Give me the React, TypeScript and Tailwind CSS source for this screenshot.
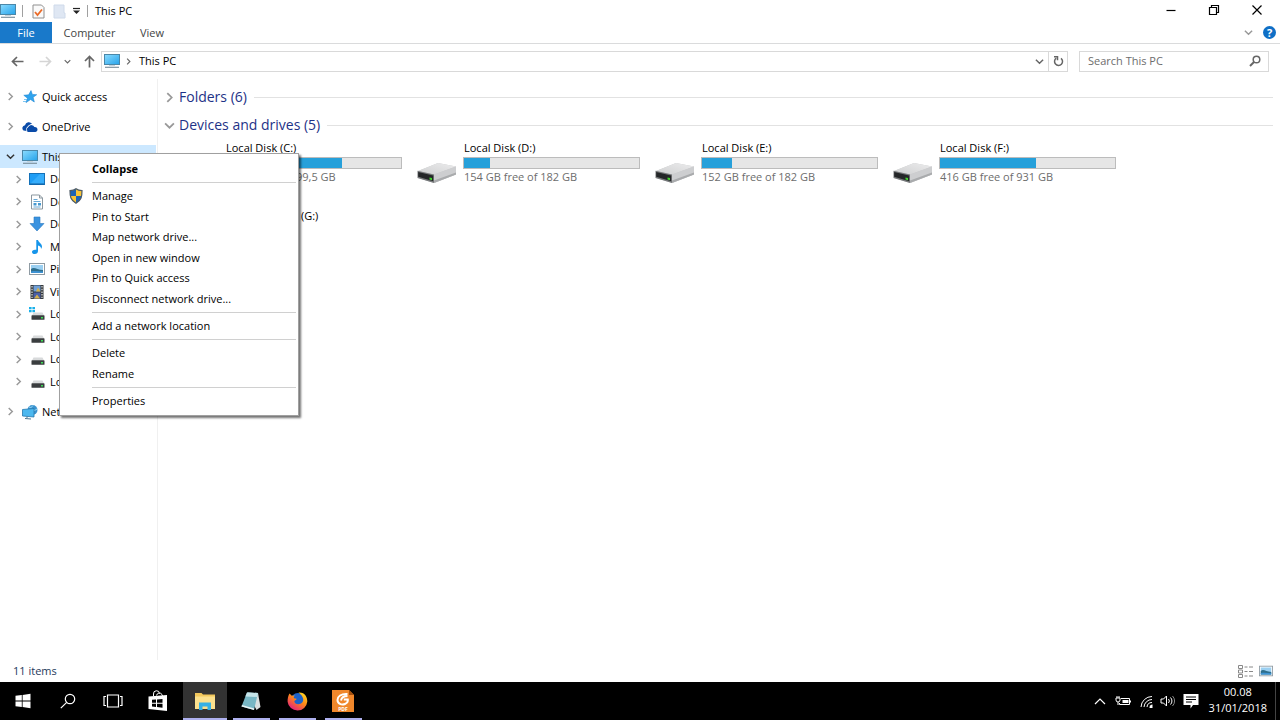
import type { ReactNode } from 'react';

interface Drive {
  name: string;
  used?: number;
  info?: string;
}

const drives: Drive[] = [
  { name: 'Local Disk (C:)', used: 66, info: '34 GB free of 99,5 GB' },
  { name: 'Local Disk (D:)', used: 15, info: '154 GB free of 182 GB' },
  { name: 'Local Disk (E:)', used: 17, info: '152 GB free of 182 GB' },
  { name: 'Local Disk (F:)', used: 55, info: '416 GB free of 931 GB' },
  { name: 'DVD RW Drive (G:)' },
];

/* ---------- Icons ---------- */

const Chevron = ({ dir, size = 9, className = '' }: { dir: 'right' | 'down' | 'up'; size?: number; className?: string }) => {
  const d = { right: 'M3 1l4 4-4 4', down: 'M1 3l4 4 4-4', up: 'M1 7l4-4 4 4' }[dir];
  return (
    <svg width={size} height={size} viewBox="0 0 10 10" fill="none" stroke="currentColor" strokeWidth="1.6" className={`shrink-0 ${className}`}>
      <path d={d} />
    </svg>
  );
};

const MonitorIcon = () => (
  <svg width="16" height="16" viewBox="0 0 16 16" className="shrink-0">
    <defs>
      <linearGradient id="screen" x1="0" y1="0" x2="1" y2="1">
        <stop offset="0" stopColor="#8bdcff" />
        <stop offset="1" stopColor="#25a2ea" />
      </linearGradient>
    </defs>
    <rect x="0.5" y="1.5" width="15" height="10" fill="url(#screen)" stroke="#4b87a8" />
    <path d="M1 14.3h14" stroke="#7d92a0" strokeWidth="1.2" />
    <path d="M5 12.5h6" stroke="#c4d3dc" />
  </svg>
);

const StarIcon = () => (
  <svg width="14" height="14" viewBox="0 0 14 14" className="shrink-0">
    <path d="M8 .6l1.300 3.800 4.400.3-3.600 2.600 1.200 4.700-3.700-2.500L3 12.600l1.500-4.400L.8 5.300l4.900-.5z" fill="#2fa4ee" stroke="#1f86d4" strokeWidth=".6" />
    <path d="M1 9.500h3M0 11.500h3" stroke="#5db9f0" strokeWidth=".8" />
  </svg>
);

const CloudIcon = () => (
  <svg width="16" height="12" viewBox="0 0 16 12" className="shrink-0">
    <path d="M1.5 9.5A3 3 0 0 1 3 4.2 4 4 0 0 1 10 2.8L6.5 4.6 4.3 7.5l.4 2.4z" fill="#0a4ba8" />
    <path d="M6 11a2.3 2.3 0 0 1-.2-4.400A3.600 3.600 0 0 1 12.400 6a2.600 2.600 0 0 1 3.100 2.600c0 1.400-1 2.400-2.200 2.400z" fill="#0a4ba8" />
    <path d="M4.900 10.500C3.800 8 5 6 6.300 5.700 7.300 3.800 9.500 3 11.300 4" fill="none" stroke="#fff" strokeWidth=".7" />
  </svg>
);

const DesktopIcon = () => (
  <svg width="16" height="14" viewBox="0 0 16 14">
    <rect x=".5" y="1.5" width="15" height="11" fill="#1e9df5" stroke="#1471b8" />
    <path d="M1 12L11 2h4v10z" fill="#36adfb" />
    <path d="M1 12h14" stroke="#0f5f9f" />
  </svg>
);

const DocumentIcon = () => (
  <svg width="14" height="16" viewBox="0 0 14 16">
    <path d="M1.5 1h8l3 3v11h-11z" fill="#fff" stroke="#8b979f" />
    <path d="M9.5 1v3h3" fill="none" stroke="#8b979f" />
    <path d="M3.5 5.5h4M3.5 7.5h7M3.5 13h7" stroke="#6aa9d4" />
    <path d="M3.5 9h3v2.5h-3zM8 9h3v2.5H8z" fill="#4899cf" />
  </svg>
);

const DownloadIcon = () => (
  <svg width="16" height="16" viewBox="0 0 16 16">
    <path d="M5 1h6v6.500h4L8 15 1 7.500h4z" fill="#3a93e0" stroke="#2a78c0" strokeWidth=".6" />
  </svg>
);

const MusicIcon = () => (
  <svg width="14" height="16" viewBox="0 0 14 16">
    <path d="M6.300 1h1.700c.3 2.500 4 3.200 4 6.500 0 1-.3 1.800-1 2.500.3-2-1-3-3-3.600V12c0 1.800-1.400 3-3.200 3S2 14.100 2 12.900c0-1.500 1.700-2.600 4.300-2.100z" fill="#1695ea" />
  </svg>
);

const PictureIcon = ({ size = 16 }: { size?: number }) => (
  <svg width={size} height={size} viewBox="0 0 16 16">
    <rect x=".5" y="2.500" width="15" height="11" fill="#fff" stroke="#8f9ba3" />
    <rect x="2" y="4" width="12" height="8" fill="#9bd0f2" />
    <path d="M2 8c3-3 6 1 12 1v3H2z" fill="#2f6f8d" />
    <path d="M2 10.500c4-1 8 0 12 0V12H2z" fill="#3e93d4" />
  </svg>
);

const VideoIcon = () => (
  <svg width="14" height="16" viewBox="0 0 14 16">
    <rect x=".5" y="1" width="13" height="14" fill="#33373a" />
    <rect x="3.500" y="1.500" width="7" height="6" fill="#6f9fd8" />
    <rect x="3.500" y="8.500" width="7" height="6" fill="#4a5fa8" />
    <path d="M6 7.500l2-4 2.500 4zM4 14.500l3-4 3 4z" fill="#d6b14a" />
    <path d="M2 2v12M12 2v12" stroke="#e5e5e5" strokeWidth="1.200" strokeDasharray="1.500 1.200" />
  </svg>
);

const SmallDriveIcon = ({ system = false }: { system?: boolean }) => (
  <svg width="16" height="16" viewBox="0 0 16 16">
    {system && <path d="M0 1h2.600v2.200H0zM3.400 1H6v2.200H3.400zM0 4h2.600v2.200H0zM3.400 4H6v2.200H3.400z" fill="#18b0ea" />}
    <path d="M4.500 6.500h9L15 9.500H3z" fill="#d8dadb" />
    <rect x="2.500" y="9.300" width="13" height="4.500" rx=".6" fill="#3a3d3f" />
    <rect x="12" y="11" width="2" height="1.500" fill="#3ddc55" />
  </svg>
);

const NetworkIcon = () => (
  <svg width="16" height="16" viewBox="0 0 16 16" className="shrink-0">
    <circle cx="10.500" cy="6" r="5" fill="#3b93cf" />
    <path d="M7 3c2 1 3 0 4-1.500M8 8c2-2 5-1 7-3" stroke="#9ddcf8" fill="none" />
    <path d="M.5 5.500l11.500-1v8.500L.5 12z" fill="#4cb8ef" stroke="#2679ae" strokeWidth=".8" />
    <path d="M5 12.500v1.500M3 14.500l6 .5" stroke="#4c7791" />
  </svg>
);

const DriveIcon = () => (
  <svg width="40" height="22" viewBox="0 0 40 22" className="shrink-0">
    <defs>
      <linearGradient id="driveTop" x1="0" y1="1" x2="1" y2="0">
        <stop offset="0" stopColor="#cfd0d1" />
        <stop offset="1" stopColor="#ececed" />
      </linearGradient>
    </defs>
    <path d="M1 9L21 1l18 3.500v8L17 21 1 16z" fill="#c6c7c9" />
    <path d="M1 9L21 1l18 3.500L17 12.500z" fill="url(#driveTop)" />
    <path d="M17 12.500L39 4.500v8L17 21z" fill="#cdced0" />
    <path d="M17 18.500l22-8v2L17 21z" fill="#a9abad" />
    <path d="M.5 8.800L17 12.500V21L.5 16z" fill="#77797b" />
    <path d="M1.200 10l15 3.600v5.600l-15-4.400z" fill="#242628" />
    <path d="M12.500 15.500l2.500.6v2.200l-2.500-.7z" fill="#42d52f" />
  </svg>
);

const ShieldIcon = () => (
  <svg width="14" height="16" viewBox="0 0 14 16">
    <path d="M7 .8c1.800 1.400 3.800 1.900 6 1.900 0 6-.5 9.500-6 12.500C1.500 12.200 1 8.700 1 2.700c2.200 0 4.200-.5 6-1.900z" fill="#1e63b5" />
    <path d="M7 .8c1.800 1.400 3.800 1.900 6 1.900 0 2-.1 3.800-.4 5.300H7zM1.400 8H7v7.200C3.400 13.200 1.900 11 1.400 8z" fill="#f9c436" />
    <path d="M7 .8c1.800 1.400 3.800 1.900 6 1.900 0 6-.5 9.500-6 12.500C1.500 12.200 1 8.700 1 2.700c2.200 0 4.200-.5 6-1.900z" fill="none" stroke="#4d5b66" strokeWidth="1.200" />
  </svg>
);

/* ---------- Title bar, ribbon and address bar ---------- */

const WindowButton = ({ label, children }: { label: string; children: ReactNode }) => (
  <button aria-label={label} className="flex w-[43px] items-center justify-center pb-[2px] hover:bg-gray-200">
    <svg width="12" height="12" viewBox="0 0 12 12" fill="none" stroke="#000" strokeWidth="1.2">
      {children}
    </svg>
  </button>
);

const TitleBar = () => (
  <header className="flex h-[22px] items-stretch justify-between pr-[2px]">
    <div className="flex items-center">
      <MonitorIcon />
      <span className="ml-[6px] h-3 w-px bg-[#a0a0a0]" />
      <button aria-label="Properties" className="ml-[9px]">
        <svg width="13" height="15" viewBox="0 0 13 15" fill="none" className="block">
          <path d="M1 1h8.500L12 3.500V14H1z" fill="#fafafa" stroke="#8f8f8f" />
          <path d="M3 8l2.500 3L10 5.500" stroke="#ea6a26" strokeWidth="1.800" />
        </svg>
      </button>
      <button aria-label="New folder" className="ml-[8px]">
        <svg width="13" height="15" viewBox="0 0 13 15" className="block">
          <path d="M1 1h10v8h1v5H1z" fill="#dfe7f3" stroke="#cfdaea" />
        </svg>
      </button>
      <button aria-label="Customize Quick Access Toolbar" className="ml-[6px]">
        <svg width="9" height="8" viewBox="0 0 9 8" className="block">
          <path d="M1 1.500h7" stroke="#222" strokeWidth="1.200" />
          <path d="M1 3.500h7L4.500 7z" fill="#222" />
        </svg>
      </button>
      <span className="ml-[6px] h-3 w-px bg-[#a0a0a0]" />
      <h1 className="ml-[7px]">This PC</h1>
    </div>
    <div className="flex">
      <WindowButton label="Minimize">
        <path d="M1.500 6.500h9" />
      </WindowButton>
      <WindowButton label="Restore">
        <path d="M1.500 3.500h7v7h-7zM3.500 3.500v-2h7v7h-2" />
      </WindowButton>
      <WindowButton label="Close">
        <path d="M1.500 1.500l9 9M10.500 1.500l-9 9" />
      </WindowButton>
    </div>
  </header>
);

const Ribbon = () => (
  <div className="flex h-[22px] items-stretch justify-between border-b border-[#dadbdc] text-[#444]">
    <div className="flex">
      <button className="w-[52px] bg-[#1979ca] text-white">File</button>
      <button className="w-[75px]">Computer</button>
      <button className="w-[50px]">View</button>
    </div>
    <div className="flex items-center gap-[10px] pr-[4px]">
      <button aria-label="Expand the Ribbon" className="text-[#999]">
        <Chevron dir="down" />
      </button>
      <button aria-label="Help" className="flex size-[13px] items-center justify-center rounded-full bg-[#0f6fc6] text-[11px] font-bold leading-none text-white">
        ?
      </button>
    </div>
  </div>
);

const Arrow = ({ d, label, className }: { d: string; label: string; className: string }) => (
  <button aria-label={label} className={className}>
    <svg width="13" height="13" viewBox="0 0 13 13" fill="none" stroke="currentColor" strokeWidth="1.700" className="block">
      <path d={d} />
    </svg>
  </button>
);

const AddressBar = () => (
  <div className="flex h-[35px] items-center pb-[1px] pl-[11px] pr-[11px] text-[#666]">
    <Arrow label="Back" d="M12.500 6.500H1.500M6 2L1.500 6.500 6 11" className="w-[13px]" />
    <Arrow label="Forward" d="M.5 6.500h11M7 2l4.500 4.500L7 11" className="ml-[15px] w-[13px] text-[#d5d5d5]" />
    <button aria-label="Recent locations" className="ml-[12px]">
      <Chevron dir="down" size={7} />
    </button>
    <Arrow label="Up" d="M6.500 12.500V1.500M2 6l4.500-4.500L11 6" className="ml-[12px] w-[13px]" />
    <div className="ml-[5px] flex h-[21px] flex-1 items-stretch border border-[#d9d9d9]">
      <div className="flex flex-1 items-center pl-[2px]">
        <MonitorIcon />
        <Chevron dir="right" size={7} className="ml-[5px]" />
        <button className="ml-[7px] text-black">This PC</button>
      </div>
      <button aria-label="Previous locations" className="flex w-[18px] items-center justify-center">
        <Chevron dir="down" />
      </button>
      <button aria-label="Refresh" className="flex w-[19px] items-center justify-center border-l border-[#d9d9d9]">
        <svg width="11" height="12" viewBox="0 0 11 12" fill="none" stroke="currentColor" strokeWidth="1.500">
          <path d="M8 3.300A4 4 0 1 1 3.200 3.200" />
          <path d="M1 1.800h3.500v3.500" />
        </svg>
      </button>
    </div>
    <div className="ml-[11px] flex h-[21px] w-[190px] items-center border border-[#d9d9d9] pl-2 pr-[7px]">
      <input aria-label="Search This PC" placeholder="Search This PC" className="min-w-0 flex-1 outline-none placeholder:text-[#6d6d6d]" />
      <svg width="12" height="12" viewBox="0 0 12 12" fill="none" stroke="currentColor" strokeWidth="1.500">
        <circle cx="7.500" cy="4.500" r="3.300" />
        <path d="M5 7L1 11" strokeWidth="2" />
      </svg>
    </div>
  </div>
);

/* ---------- Context menu ---------- */

const MenuItem = ({ children, icon }: { children: ReactNode; icon?: ReactNode }) => (
  <button role="menuitem" className="flex items-center text-left hover:bg-[#e5f3ff]">
    <span className="flex w-[32px] justify-center">{icon}</span>
    {children}
  </button>
);

const MenuSeparator = () => <div role="separator" className="my-[3px] ml-[32px] mr-[2px] h-px bg-[#d0d0d0]" />;

const ContextMenu = () => (
  <div
    role="menu"
    className="absolute left-[59px] top-[8px] z-10 w-[240px] border border-[#a0a0a0] bg-white py-[4px] shadow-[2px_2px_2px_rgba(0,0,0,0.55)]"
  >
    <div className="grid h-[21px] font-bold">
      <MenuItem>Collapse</MenuItem>
    </div>
    <MenuSeparator />
    <div className="grid h-[123px] auto-rows-fr">
      <MenuItem icon={<ShieldIcon />}>Manage</MenuItem>
      <MenuItem>Pin to Start</MenuItem>
      <MenuItem>Map network drive...</MenuItem>
      <MenuItem>Open in new window</MenuItem>
      <MenuItem>Pin to Quick access</MenuItem>
      <MenuItem>Disconnect network drive...</MenuItem>
    </div>
    <MenuSeparator />
    <div className="grid h-5">
      <MenuItem>Add a network location</MenuItem>
    </div>
    <MenuSeparator />
    <div className="grid h-[41px] auto-rows-fr">
      <MenuItem>Delete</MenuItem>
      <MenuItem>Rename</MenuItem>
    </div>
    <MenuSeparator />
    <div className="grid h-5">
      <MenuItem>Properties</MenuItem>
    </div>
  </div>
);

/* ---------- Navigation pane ---------- */

const TreeRoot = ({ label, icon, open = false }: { label: string; icon: ReactNode; open?: boolean }) => (
  <button
    aria-expanded={open}
    className={`mr-[1px] flex h-[23px] items-center pl-[6px] text-left ${open ? 'bg-[#cce8ff] text-[#333]' : 'text-[#999]'}`}
  >
    <Chevron dir={open ? 'down' : 'right'} />
    <span className="ml-[7px] flex w-4 justify-center">{icon}</span>
    <span className="ml-[4px] text-black">{label}</span>
  </button>
);

const folders: { label: string; icon: ReactNode }[] = [
  { label: 'Desktop', icon: <DesktopIcon /> },
  { label: 'Documents', icon: <DocumentIcon /> },
  { label: 'Downloads', icon: <DownloadIcon /> },
  { label: 'Music', icon: <MusicIcon /> },
  { label: 'Pictures', icon: <PictureIcon /> },
  { label: 'Videos', icon: <VideoIcon /> },
  { label: 'Local Disk (C:)', icon: <SmallDriveIcon system /> },
  { label: 'Local Disk (D:)', icon: <SmallDriveIcon /> },
  { label: 'Local Disk (E:)', icon: <SmallDriveIcon /> },
  { label: 'Local Disk (F:)', icon: <SmallDriveIcon /> },
];

const Sidebar = () => (
  <nav className="flex w-[158px] shrink-0 flex-col border-r border-[#f0f0f0] pt-[6px]">
    <TreeRoot label="Quick access" icon={<StarIcon />} />
    <div className="h-[7px]" />
    <TreeRoot label="OneDrive" icon={<CloudIcon />} />
    <div className="h-[7px]" />
    <div className="relative flex flex-col">
      <TreeRoot label="This PC" icon={<MonitorIcon />} open />
      <ContextMenu />
    </div>
    <div className="grid h-[225px] auto-rows-fr">
      {folders.map((item) => (
        <button key={item.label} className="flex items-center pl-[14px] text-left">
          <Chevron dir="right" className="text-[#999]" />
          <span className="ml-[6px] flex w-4 justify-center">{item.icon}</span>
          <span className="ml-[5px]">{item.label}</span>
        </button>
      ))}
    </div>
    <div className="h-[7px]" />
    <TreeRoot label="Network" icon={<NetworkIcon />} />
  </nav>
);

/* ---------- Drives ---------- */

const GroupHeader = ({ title, open = false }: { title: string; open?: boolean }) => (
  <div className="flex h-7 items-center">
    <button aria-expanded={open} className="flex items-center">
      <Chevron dir={open ? 'down' : 'right'} size={11} className="text-[#999]" />
      <h2 className="ml-[4px] text-[14px] text-[#1e3287]">{title}</h2>
    </button>
    <span className="ml-[7px] h-px flex-1 bg-[#e2e2e2]" />
  </div>
);

const DriveTile = ({ drive }: { drive: Drive }) => (
  <div className="flex h-[68px] items-start">
    <div className="pt-[21px]">
      <DriveIcon />
    </div>
    <div className="ml-[6px] w-[177px]">
      <p className="h-4 pl-px leading-[14px]">{drive.name}</p>
      {drive.used !== undefined && (
        <div className="h-[12px] border border-[#bcbcbc] bg-[#e6e6e6]">
          <div className="h-full bg-[#26a0da]" style={{ width: `${drive.used}%` }} />
        </div>
      )}
      <p className="h-4 pl-px leading-4 text-[#6d6d6d]">{drive.info}</p>
    </div>
  </div>
);

/* ---------- Taskbar ---------- */

const TaskButton = ({ label, children }: { label: string; children: ReactNode }) => (
  <button aria-label={label} className="flex w-[45px] items-center justify-center">
    {children}
  </button>
);

const AppButton = ({ label, active = false, children }: { label: string; active?: boolean; children: ReactNode }) => (
  <button aria-label={label} className={`flex w-11 flex-col items-center ${active ? 'bg-[#333]' : ''}`}>
    <span className="flex flex-1 items-center pt-[2px]">{children}</span>
    <span className={`h-[2px] bg-[#aeb0ee] ${active ? 'w-full' : 'w-[37px]'}`} />
  </button>
);

const Taskbar = () => (
  <footer className="flex h-[38px] items-stretch justify-between bg-black text-white">
    <div className="flex">
      <div className="flex">
        <TaskButton label="Start">
          <svg width="16" height="16" viewBox="0 0 16 16" fill="#fff">
            <path d="M.5 2.800L6.800 2v5.600H.5zM7.600 1.900L15.500.8v6.800H7.600zM.5 8.400h6.300V14L.5 13.200zM7.600 8.400h7.900v6.800l-7.900-1.100z" />
          </svg>
        </TaskButton>
        <TaskButton label="Search">
          <svg width="16" height="16" viewBox="0 0 16 16" fill="none" stroke="#fff" strokeWidth="1.200">
            <circle cx="10" cy="6" r="4.700" />
            <path d="M6.700 9.300L.8 15.200" />
          </svg>
        </TaskButton>
        <TaskButton label="Task View">
          <svg width="20" height="14" viewBox="0 0 20 14" fill="none" stroke="#fff" strokeWidth="1.200">
            <path d="M4.500 1h11v12h-11zM3 2.500H1v9h2M17 2.500h2v9h-2" />
          </svg>
        </TaskButton>
        <TaskButton label="Store">
          <svg width="20" height="22" viewBox="0 0 20 22">
            <path d="M5.500 6V4a3 3 0 0 1 6-.5M8.500 5.500a3 3 0 0 1 5.500-1l.5 1.500" fill="none" stroke="#fff" />
            <path d="M.5 6.500L19 5v16L.5 19z" fill="#fff" />
            <path d="M4 9.800l4-.3v3.300H4zM9 9.400l5.500-.5v3.900H9zM4 13.700h4V17l-4-.4zM9 13.700h5.500v4L9 17.100z" fill="#000" />
          </svg>
        </TaskButton>
      </div>
      <div className="ml-[3px] flex gap-[2px]">
        <AppButton label="File Explorer" active>
          <svg width="20" height="18" viewBox="0 0 20 18">
            <path d="M0 1h6.500l1.500 1.500h12V17H0z" fill="#f2c75c" />
            <path d="M0 4.500h20V17H0z" fill="#fbe08d" />
            <path d="M4 10.500h12V18h-3.500v-3.500h-5V18H4z" fill="#36b0e4" />
          </svg>
        </AppButton>
        <AppButton label="Notepad">
          <svg width="20" height="20" viewBox="0 0 20 20">
            <path d="M6.500 1.500L17 2l2.500 14-4 3z" fill="#d9dfe0" />
            <path d="M6 1.500l11 .5-4 17L.5 15.500z" fill="#77b6c4" />
            <path d="M6 1.500l11 .5-1 4L4.300 5.500z" fill="#c5e4e9" />
            <path d="M.5 15.500l12.500 3.500.3-1.500L1 14z" fill="#e8f2f4" />
          </svg>
        </AppButton>
        <AppButton label="Firefox">
          <svg width="21" height="21" viewBox="0 0 21 21">
            <defs>
              <linearGradient id="fox" x1=".9" y1="0" x2=".2" y2="1">
                <stop offset="0" stopColor="#ffe226" />
                <stop offset=".45" stopColor="#ff8a16" />
                <stop offset="1" stopColor="#e31587" />
              </linearGradient>
            </defs>
            <circle cx="11" cy="9.500" r="7.500" fill="#1c62c9" />
            <path d="M2.500 2.500l2.300 2.300L8 4.500c-1.200.8-1.500 1.800-1 2.800l2.500.4c.3.900-1.500 1.500-2.200 2.300.3 3 3.700 4.200 6.700 2.500 2.500-1.500 2.800-4.500 1.500-6.500C14.500 3.500 13 3 11.500 1.500c6.500-.5 9 5 8.800 9a9.900 9.900 0 0 1-19.700.3C.5 8 1.200 4.500 2.500 2.500z" fill="url(#fox)" />
          </svg>
        </AppButton>
        <AppButton label="Foxit Reader">
          <svg width="22" height="22" viewBox="0 0 22 22">
            <path d="M0 0h17l5 5v17H0z" fill="#f0872b" />
            <path d="M17 0v5h5z" fill="#a4500f" />
            <path d="M15.500 4C9 3.500 5.500 6.500 5.500 10c0 3.500 4 5.500 7.500 4 2.500-1 3-3 2.800-4.500h-4M9 10.500c.5-3 3.500-4.500 6.500-4.500" fill="none" stroke="#fff" strokeWidth="2" />
            <text x="11" y="21" textAnchor="middle" fontSize="5" fontWeight="700" fill="#fff">PDF</text>
          </svg>
        </AppButton>
      </div>
    </div>
    <div className="flex items-center">
      <button aria-label="Show hidden icons">
        <svg width="12" height="8" viewBox="0 0 12 8" fill="none" stroke="#fff" strokeWidth="1.200" className="block">
          <path d="M1 7l5-5 5 5" />
        </svg>
      </button>
      <button aria-label="Battery" className="ml-[9px]">
        <svg width="16" height="12" viewBox="0 0 16 12" fill="none" stroke="#fff" className="block">
          <path d="M6 3.500h8.500v6H4.500V8M15.500 5.500v2" />
          <path d="M7.500 5h6v3h-6z" fill="#fff" stroke="none" />
          <path d="M1 3h4v2a2 2 0 0 1-4 0zM2 1v2M4 1v2M3 7v3" />
        </svg>
      </button>
      <button aria-label="Wi-Fi" className="ml-[9px]">
        <svg width="13" height="13" viewBox="0 0 13 13" fill="none" stroke="#fff" className="block">
          <path d="M1 12A11 11 0 0 1 12 1.500M4 12a8 8 0 0 1 8-7.500M7 12a5 5 0 0 1 5-4.500" />
          <path d="M12.500 9.500V13H9.500a3 3 0 0 1 3-3.500z" fill="#fff" stroke="none" />
        </svg>
      </button>
      <button aria-label="Volume" className="ml-[7px]">
        <svg width="15" height="12" viewBox="0 0 15 12" fill="none" stroke="#fff" className="block">
          <path d="M1 4h2.500L6.500 1v10l-3-3H1z" />
          <path d="M8.500 4a3 3 0 0 1 0 4M10.500 2.500a5 5 0 0 1 0 7" />
          <path d="M12.500 1a7 7 0 0 1 0 10" stroke="#888" />
        </svg>
      </button>
      <button aria-label="Notifications" className="ml-[8px]">
        <svg width="16" height="16" viewBox="0 0 16 16" className="block">
          <path d="M.5 1h15v11H10l-2.500 3.500V12h-7z" fill="#fff" />
          <path d="M3 4h10M3 6.500h10M3 9h6" stroke="#000" />
        </svg>
      </button>
      <time className="ml-[10px] pb-[2px] text-center leading-4">
        00.08
        <br />
        31/01/2018
      </time>
      <span className="ml-[8px] mr-[4px] h-full w-px bg-[#444]" />
    </div>
  </footer>
);

export default function App() {
  return (
    <div className="flex min-h-screen flex-col bg-white font-['Open_Sans','Noto_Sans',sans-serif] text-[11px] leading-4 text-black">
      <TitleBar />
      <Ribbon />
      <AddressBar />
      <div className="flex flex-1">
        <Sidebar />
        <main className="flex-1 pl-[6px] pr-[7px] pt-[4px]">
          <GroupHeader title="Folders (6)" />
          <GroupHeader title="Devices and drives (5)" open />
          <div className="grid grid-cols-[repeat(auto-fill,238px)] pl-[15px] pt-[2px]">
            {drives.map((drive) => (
              <DriveTile key={drive.name} drive={drive} />
            ))}
          </div>
        </main>
      </div>
      <div className="flex h-[22px] items-center justify-between pl-[13px] pr-[7px] text-[#1e395b]">
        <p>11 items</p>
        <div className="flex items-center gap-[6px]">
          <button aria-label="Details view">
            <svg width="15" height="13" viewBox="0 0 15 13" fill="none" stroke="#888" className="block">
              <path d="M.5.500h4v3h-4zM.5 5h4v3h-4zM.5 9.500h4v3h-4z" />
              <path d="M6.500 2h3M11 2h4M6.500 6.500h3M11 6.500h4M6.500 11h3M11 11h4" />
            </svg>
          </button>
          <button aria-label="Large icons view" className="flex">
            <PictureIcon size={14} />
          </button>
        </div>
      </div>
      <Taskbar />
    </div>
  );
}
